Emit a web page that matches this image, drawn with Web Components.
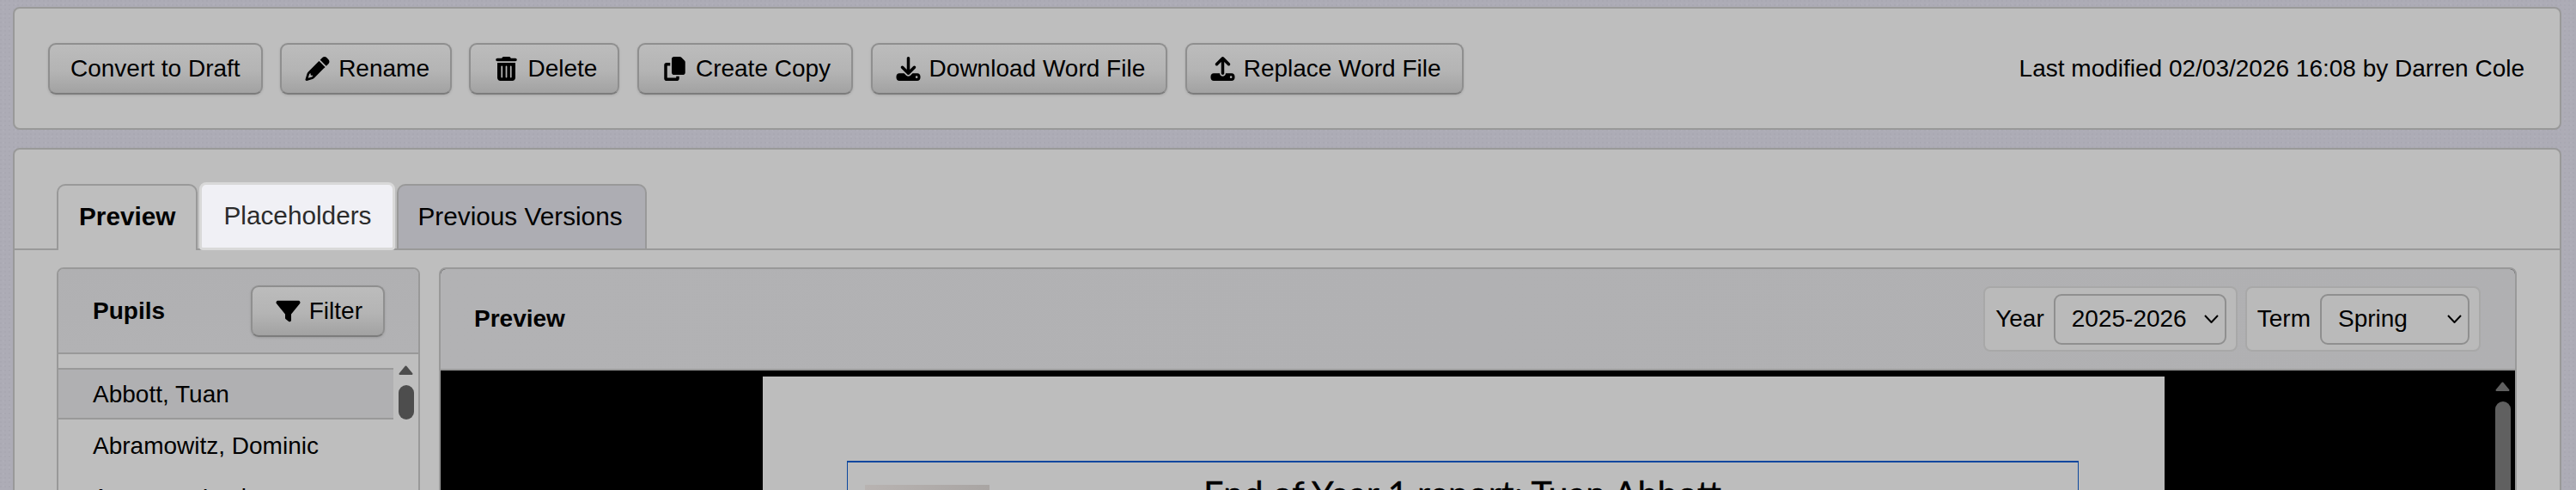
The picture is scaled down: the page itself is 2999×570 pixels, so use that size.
<!DOCTYPE html>
<html lang="en">
<head>
<meta charset="utf-8">
<title>Report template</title>
<style>
    html, body {
        height: 570px;
        margin: 0;
        overflow: hidden;
    }

    body {
        padding: 8px 17px 0 15px;
        box-sizing: border-box;
        color: #000;
        font: 28px/1.2 "Liberation Sans", Arial, sans-serif;
        background-color: #adacb6;
        background-image:
            radial-gradient(circle at 1px 1px, #a9a8b2 1px, transparent 1.5px),
            radial-gradient(circle at 4px 5px, #b0afb9 1px, transparent 1.5px);
        background-size: 5px 5px, 7px 7px;
    }
</style>
</head>
<body>
<report-page>
    <tool-bar modified="Last modified 02/03/2026 16:08 by Darren Cole">
        <tool-button>Convert to Draft</tool-button>
        <tool-button icon="pencil">Rename</tool-button>
        <tool-button icon="trash">Delete</tool-button>
        <tool-button icon="copy">Create Copy</tool-button>
        <tool-button icon="download">Download Word File</tool-button>
        <tool-button icon="upload">Replace Word File</tool-button>
    </tool-bar>
    <report-tabs>
        <pupil-list>
            <pupil-row selected>Abbott, Tuan</pupil-row>
            <pupil-row>Abramowitz, Dominic</pupil-row>
            <pupil-row>Amoroso, Lucia</pupil-row>
        </pupil-list>
        <preview-pane>
            <select-box slot="controls" label="Year" value="2025-2026" width="201"></select-box>
            <select-box slot="controls" label="Term" value="Spring" width="174"></select-box>
            <report-sheet>End of Year 1 report: Tuan Abbott</report-sheet>
        </preview-pane>
    </report-tabs>
</report-page>

<script>
const ICONS = {
    pencil: ['0 0 512 512', 'M410.3 231l11.3-11.3-33.9-33.9-62.1-62.1L291.7 89.8l-11.3 11.3-22.6 22.6L58.6 322.9c-10.4 10.4-18 23.3-22.2 37.4L1 480.7c-2.5 8.4-.2 17.5 6.1 23.7s15.3 8.5 23.7 6.1l120.3-35.4c14.1-4.2 27-11.8 37.4-22.2L387.7 253.7 410.3 231zM160 399.4l-9.1 22.7c-4 3.1-8.5 5.4-13.3 6.9L59.4 452l23-78.1c1.4-4.9 3.8-9.4 6.9-13.3l22.7-9.1v32c0 8.8 7.2 16 16 16h32zM362.7 18.7L348.3 33.2 325.7 55.8 314.3 67.1l33.9 33.9 62.1 62.1 33.9 33.9 11.3-11.3 22.6-22.6 14.5-14.5c25-25 25-65.5 0-90.5L453.3 18.7c-25-25-65.5-25-90.5 0z'],
    trash: ['0 0 448 512', 'M135.2 17.7C140.6 6.8 151.7 0 163.8 0H284.2c12.1 0 23.2 6.8 28.6 17.7L320 32h96c17.7 0 32 14.3 32 32s-14.3 32-32 32H32C14.3 96 0 81.7 0 64S14.3 32 32 32h96l7.2-14.3zM32 128H416V448c0 35.3-28.7 64-64 64H96c-35.3 0-64-28.7-64-64V128zm96 64c-8.8 0-16 7.2-16 16V432c0 8.8 7.2 16 16 16s16-7.2 16-16V208c0-8.8-7.2-16-16-16zm96 0c-8.8 0-16 7.2-16 16V432c0 8.8 7.2 16 16 16s16-7.2 16-16V208c0-8.8-7.2-16-16-16zm96 0c-8.8 0-16 7.2-16 16V432c0 8.8 7.2 16 16 16s16-7.2 16-16V208c0-8.8-7.2-16-16-16z'],
    copy: ['0 0 448 512', 'M208 0H332.1c12.7 0 24.9 5.1 33.9 14.1l67.9 67.9c9 9 14.1 21.2 14.1 33.9V336c0 26.5-21.5 48-48 48H208c-26.5 0-48-21.5-48-48V48c0-26.5 21.5-48 48-48zM48 128h80v64H64V448H256V416h64v48c0 26.5-21.5 48-48 48H48c-26.5 0-48-21.5-48-48V176c0-26.5 21.5-48 48-48z'],
    download: ['0 0 512 512', 'M288 32c0-17.7-14.3-32-32-32s-32 14.3-32 32V274.7l-73.4-73.4c-12.5-12.5-32.8-12.5-45.3 0s-12.5 32.8 0 45.3l128 128c12.5 12.5 32.8 12.5 45.3 0l128-128c12.5-12.5 12.5-32.8 0-45.3s-32.8-12.5-45.3 0L288 274.7V32zM64 352c-35.3 0-64 28.7-64 64v32c0 35.3 28.7 64 64 64H448c35.3 0 64-28.7 64-64V416c0-35.3-28.7-64-64-64H346.5l-45.3 45.3c-25 25-65.5 25-90.5 0L165.5 352H64zm368 56a24 24 0 1 1 0 48 24 24 0 1 1 0-48z'],
    upload: ['0 0 512 512', 'M288 109.3V352c0 17.7-14.3 32-32 32s-32-14.3-32-32V109.3l-73.4 73.4c-12.5 12.5-32.8 12.5-45.3 0s-12.5-32.8 0-45.3l128-128c12.5-12.5 32.8-12.5 45.3 0l128 128c12.5 12.5 12.5 32.8 0 45.3s-32.8 12.5-45.3 0L288 109.3zM64 352H192c0 35.3 28.7 64 64 64s64-28.7 64-64H448c35.3 0 64 28.7 64 64v32c0 35.3-28.7 64-64 64H64c-35.3 0-64-28.7-64-64V416c0-35.3 28.7-64 64-64zM432 456a24 24 0 1 0 0-48 24 24 0 1 0 0 48z'],
    filter: ['0 0 512 512', 'M3.9 54.9C10.5 40.9 24.5 32 40 32H472c15.5 0 29.5 8.9 36.1 22.9s4.6 30.5-5.2 42.5L320 320.9V448c0 12.1-6.8 23.2-17.7 28.6s-23.8 4.3-33.5-3l-64-48c-8.1-6-12.8-15.5-12.8-25.6V320.9L9 97.3C-.7 85.4-2.8 68.8 3.9 54.9z']
};

const iconSvg = (name) => {
    const [box, d] = ICONS[name];
    return `<svg viewBox="${box}" aria-hidden="true"><path fill="currentColor" d="${d}"/></svg>`;
};

class ReportPage extends HTMLElement {
    connectedCallback() {
        this.attachShadow({ mode: 'open' });
        this.shadowRoot.innerHTML = `
            <style>
                :host {
                    display: flex;
                    flex-direction: column;
                    gap: 21px;
                }
            </style>
            <slot></slot>
        `;
    }
}

class ToolBar extends HTMLElement {
    connectedCallback() {
        this.attachShadow({ mode: 'open' });
        this.shadowRoot.innerHTML = `
            <style>
                :host {
                    display: flex;
                    align-items: center;
                    justify-content: space-between;
                    height: 143px;
                    box-sizing: border-box;
                    padding: 0 41px 0 39px;
                    background: #bebebe;
                    border: 2px solid #999;
                    border-radius: 8px;
                }

                .buttons {
                    display: flex;
                    gap: 20.5px;
                }
            </style>
            <div class="buttons"><slot></slot></div>
            <span>${this.getAttribute('modified')}</span>
        `;
    }
}

class ToolButton extends HTMLElement {
    connectedCallback() {
        const icon = this.getAttribute('icon');
        this.attachShadow({ mode: 'open' });
        this.shadowRoot.innerHTML = `
            <style>
                :host {
                    display: flex;
                    align-items: center;
                    height: 60px;
                    box-sizing: border-box;
                    padding: 0 24px;
                    background: linear-gradient(#bcbcbc, #b4b4b4 55%, #a2a2a2);
                    border: 2px solid #8f8f8f;
                    border-bottom-color: #7c7c7c;
                    border-radius: 9px;
                    box-shadow: 0 1px 3px rgba(0, 0, 0, 0.12);
                    white-space: nowrap;
                }

                svg {
                    width: 35px;
                    height: 28px;
                    margin-right: 7px;
                }
            </style>
            ${icon ? iconSvg(icon) : ''}
            <slot></slot>
        `;
    }
}

class ReportTabs extends HTMLElement {
    connectedCallback() {
        this.attachShadow({ mode: 'open' });
        this.shadowRoot.innerHTML = `
            <style>
                :host {
                    display: block;
                    height: 700px;
                    box-sizing: border-box;
                    padding-top: 40px;
                    background: #bebebe;
                    border: 2px solid #999;
                    border-radius: 8px;
                }

                .strip {
                    display: flex;
                    gap: 3px;
                    padding-left: 49px;
                    height: 75px;
                    border-bottom: 2px solid #999;
                    font-size: 29.75px;
                }

                .tab {
                    display: flex;
                    align-items: center;
                    height: 75px;
                    box-sizing: border-box;
                    padding: 0 24px 2px;
                    border: 2px solid #999;
                    border-bottom: 0;
                    border-radius: 10px 10px 0 0;
                }

                .active {
                    height: 77px;
                    padding-bottom: 4px;
                    font-weight: 700;
                    background: #bebebe;
                }

                .hover {
                    margin-left: 1px;
                    color: #2b2b2b;
                    background: #f0f0f5;
                    border: 0;
                    border-radius: 6px 6px 2px 2px;
                    outline: 3px solid #d9d9d9;
                    outline-offset: -1px;
                    width: 224px;
                    justify-content: center;
                    padding: 0 0 2px;
                }

                .rest {
                    padding: 0 26px 2px 22px;
                    background: #adadb3;
                    margin-left: 1px;
                }

                .panes {
                    display: grid;
                    grid-template-columns: 423px 1fr;
                    gap: 22px;
                    height: 600px;
                    padding: 20px 50px 0 49px;
                }
            </style>
            <div class="strip">
                <div class="tab active">Preview</div>
                <div class="tab hover">Placeholders</div>
                <div class="tab rest">Previous Versions</div>
            </div>
            <div class="panes"><slot></slot></div>
        `;
    }
}

class FakeScrollbar extends HTMLElement {
    connectedCallback() {
        this.attachShadow({ mode: 'open' });
        this.shadowRoot.innerHTML = `
            <style>
                :host {
                    display: flex;
                    flex-direction: column;
                    align-items: center;
                    flex: 0 0 29px;
                    gap: 12px;
                    padding-top: 13px;
                    box-sizing: border-box;
                    color: var(--bar-colour, #4d4d4d);
                }

                svg {
                    display: block;
                    width: 17px;
                    height: 11px;
                }

                .thumb {
                    width: 18px;
                    height: var(--thumb-height, 40px);
                    background: currentColor;
                    border-radius: 9px;
                }
            </style>
            <svg viewBox="0 0 17 11"><path fill="currentColor" stroke="currentColor" stroke-width="2" stroke-linejoin="round" d="M8.5 1.5 15.5 10H1.5z"/></svg>
            <div class="thumb"></div>
        `;
    }
}

class PupilList extends HTMLElement {
    connectedCallback() {
        this.attachShadow({ mode: 'open' });
        this.shadowRoot.innerHTML = `
            <style>
                :host {
                    display: flex;
                    flex-direction: column;
                    box-sizing: border-box;
                    background: #bebebe;
                    border: 2px solid #999;
                    border-radius: 8px 8px 0 0;
                }

                header {
                    display: flex;
                    align-items: center;
                    justify-content: space-between;
                    height: 99px;
                    box-sizing: border-box;
                    padding: 0 39px 0 40px;
                    background: linear-gradient(#b0b0b2, #b2b2b4);
                    border-bottom: 2px solid #999;
                    font-weight: 700;
                    border-radius: 6px 6px 0 0;
                }

                header tool-button {
                    font-weight: 400;
                }

                .body {
                    display: flex;
                    flex: 1;
                }

                .rows {
                    flex: 1;
                    padding-top: 16px;
                }
            </style>
            <header>
                <span>Pupils</span>
                <tool-button icon="filter">Filter</tool-button>
            </header>
            <div class="body">
                <div class="rows"><slot></slot></div>
                <fake-scrollbar></fake-scrollbar>
            </div>
        `;
    }
}

class PupilRow extends HTMLElement {
    connectedCallback() {
        this.attachShadow({ mode: 'open' });
        this.shadowRoot.innerHTML = `
            <style>
                :host {
                    display: flex;
                    align-items: center;
                    height: 60px;
                    box-sizing: border-box;
                    padding: 2px 40px 0;
                }

                :host([selected]) {
                    background: #b0b0b2;
                    border-top: 2px solid #999;
                    border-bottom: 2px solid #999;
                }
            </style>
            <slot></slot>
        `;
    }
}

class PreviewPane extends HTMLElement {
    connectedCallback() {
        this.attachShadow({ mode: 'open' });
        this.shadowRoot.innerHTML = `
            <style>
                :host {
                    display: flex;
                    flex-direction: column;
                    box-sizing: border-box;
                    background: #000;
                    border: 2px solid #999;
                    border-radius: 8px 8px 0 0;
                }

                header {
                    display: flex;
                    align-items: center;
                    justify-content: space-between;
                    height: 118px;
                    box-sizing: border-box;
                    padding: 0 40px 0 39px;
                    background: linear-gradient(90deg, #b2b2b4, #b0b0b2);
                    border-bottom: 2px solid #999;
                    border-radius: 6px 6px 0 0;
                    font-weight: 700;
                }

                .controls {
                    display: flex;
                    gap: 9px;
                    font-weight: 400;
                }

                .body {
                    display: flex;
                    flex: 1;
                }

                .view {
                    flex: 1;
                    padding: 7px 0 0 375px;
                }

                fake-scrollbar {
                    --bar-colour: #606060;
                    --thumb-height: 300px;
                }
            </style>
            <header>
                <span>Preview</span>
                <div class="controls"><slot name="controls"></slot></div>
            </header>
            <div class="body">
                <div class="view"><slot></slot></div>
                <fake-scrollbar></fake-scrollbar>
            </div>
        `;
    }
}

class SelectBox extends HTMLElement {
    connectedCallback() {
        this.attachShadow({ mode: 'open' });
        this.shadowRoot.innerHTML = `
            <style>
                :host {
                    display: flex;
                    align-items: center;
                    gap: 11px;
                    height: 76px;
                    box-sizing: border-box;
                    padding: 0 11px 0 12px;
                    background: #bababa;
                    border: 2px solid #a8a8a8;
                    border-radius: 8px;
                }

                .select {
                    display: flex;
                    align-items: center;
                    justify-content: space-between;
                    width: ${this.getAttribute('width')}px;
                    height: 59px;
                    box-sizing: border-box;
                    padding: 0 7px 0 19px;
                    background: #bababa;
                    border: 2px solid #8f8f8f;
                    border-radius: 9px;
                }

                svg {
                    width: 17px;
                    height: 10px;
                }
            </style>
            <span>${this.getAttribute('label')}</span>
            <div class="select" role="combobox">
                <span>${this.getAttribute('value')}</span>
                <svg viewBox="0 0 17 10"><path fill="none" stroke="#000" stroke-width="2" d="M1 1l7.5 8L16 1"/></svg>
            </div>
        `;
    }
}

class ReportSheet extends HTMLElement {
    connectedCallback() {
        this.attachShadow({ mode: 'open' });
        this.shadowRoot.innerHTML = `
            <style>
                :host {
                    display: block;
                    width: 1632px;
                    height: 500px;
                    box-sizing: border-box;
                    padding: 98px 100px 0 98px;
                    background: #bdbdbd;
                }

                .frame {
                    display: flex;
                    align-items: flex-start;
                    height: 300px;
                    box-sizing: border-box;
                    padding: 26px 0 0 20px;
                    border: 1px solid #0b479e;
                    border-top-width: 2px;
                }

                .crest {
                    flex: 0 0 145px;
                    height: 120px;
                    background: linear-gradient(90deg, #b8b3b1, #a9a5a3);
                }

                h1 {
                    margin: -15px 0 0 249px;
                    white-space: nowrap;
                    font: 400 41.4px/1.2 Lato, "Liberation Sans", sans-serif;
                    -webkit-text-stroke: 0.3px #000;
                }
            </style>
            <div class="frame">
                <div class="crest"></div>
                <h1><slot></slot></h1>
            </div>
        `;
    }
}

customElements.define('report-page', ReportPage);
customElements.define('tool-bar', ToolBar);
customElements.define('tool-button', ToolButton);
customElements.define('report-tabs', ReportTabs);
customElements.define('fake-scrollbar', FakeScrollbar);
customElements.define('pupil-list', PupilList);
customElements.define('pupil-row', PupilRow);
customElements.define('preview-pane', PreviewPane);
customElements.define('select-box', SelectBox);
customElements.define('report-sheet', ReportSheet);
</script>
</body>
</html>
